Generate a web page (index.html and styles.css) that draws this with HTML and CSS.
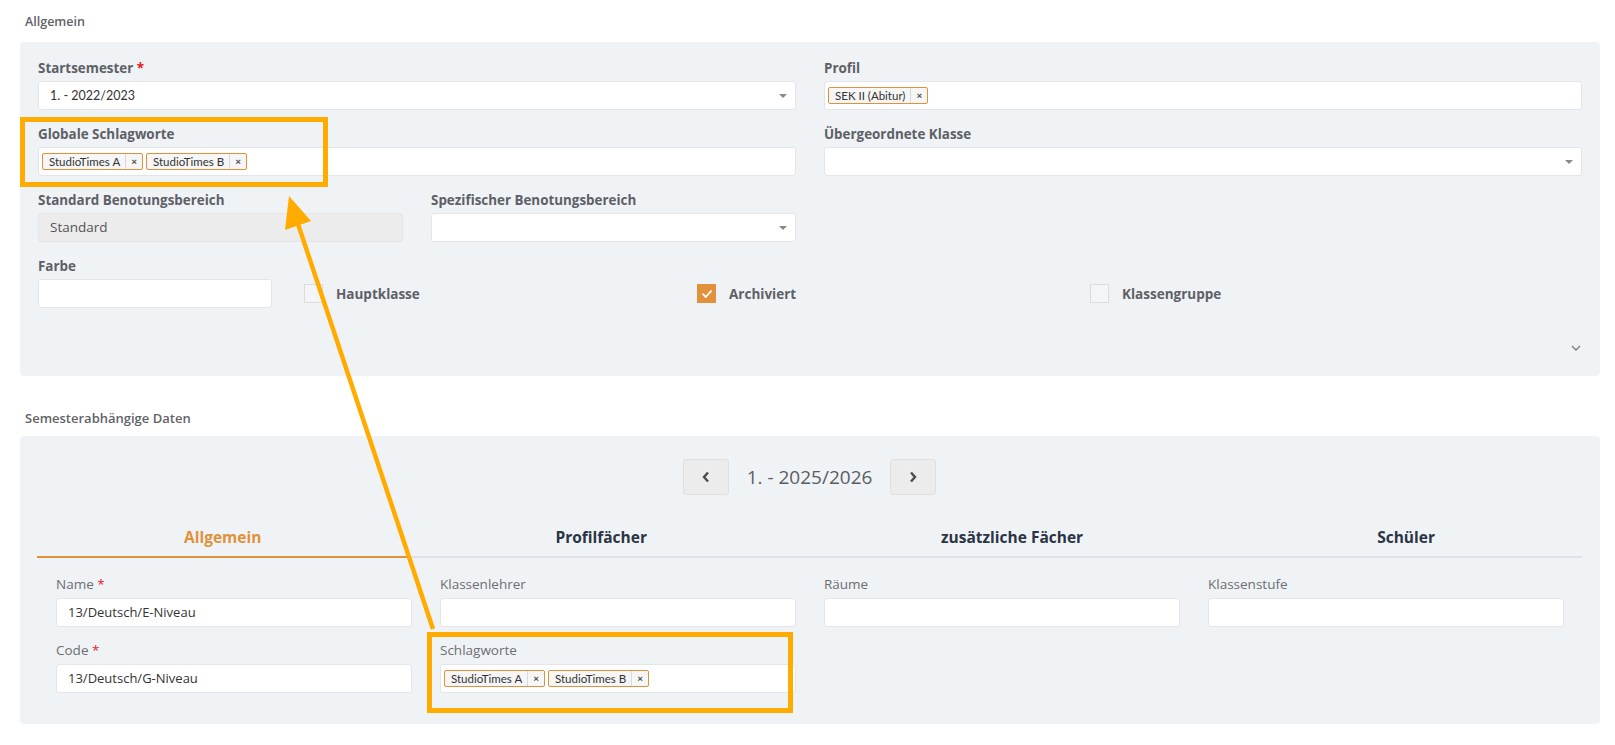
FILE: index.html
```html
<!DOCTYPE html>
<html lang="de">
<head>
<meta charset="utf-8">
<title>Klasse</title>
<link rel="stylesheet" href="styles.css">
</head>
<body>
<div class="page">
  <div class="section-title">Allgemein</div>
  <div class="panel panel-general">
    <div class="grid grid-2">
      <div class="field">
        <div class="label">Startsemester <span class="req">*</span></div>
        <div class="input select">1. - 2022/2023<span class="caret"></span></div>
      </div>
      <div class="field">
        <div class="label">Profil</div>
        <div class="input tags"><span class="tag"><span class="tag-text">SEK II (Abitur)</span><span class="tag-x">×</span></span></div>
      </div>
      <div class="field">
        <div class="label">Globale Schlagworte</div>
        <div class="input tags"><span class="tag"><span class="tag-text">StudioTimes A</span><span class="tag-x">×</span></span><span class="tag"><span class="tag-text">StudioTimes B</span><span class="tag-x">×</span></span></div>
      </div>
      <div class="field">
        <div class="label">Übergeordnete Klasse</div>
        <div class="input select"><span class="caret"></span></div>
      </div>
    </div>
    <div class="grid grid-4 row-gap">
      <div class="field">
        <div class="label">Standard Benotungsbereich</div>
        <div class="input disabled">Standard</div>
      </div>
      <div class="field">
        <div class="label">Spezifischer Benotungsbereich</div>
        <div class="input select"><span class="caret"></span></div>
      </div>
    </div>
    <div class="grid grid-check row-gap">
      <div class="field field-farbe">
        <div class="label">Farbe</div>
        <div class="input"></div>
      </div>
      <div class="check"><span class="box"></span><span class="check-label">Hauptklasse</span></div>
      <div class="check"><span class="box checked"><svg viewBox="0 0 10 8" width="10" height="8"><path d="M1 4.2 L3.8 7 L9 1.2" fill="none" stroke="#fff" stroke-width="1.8" stroke-linecap="round" stroke-linejoin="round"/></svg></span><span class="check-label">Archiviert</span></div>
      <div class="check"><span class="box"></span><span class="check-label">Klassengruppe</span></div>
    </div>
    <div class="panel-foot">
      <svg viewBox="0 0 10 6" width="10" height="6"><path d="M1 1 L5 5 L9 1" fill="none" stroke="#7a7d82" stroke-width="1.4"/></svg>
    </div>
  </div>

  <div class="section-title second">Semesterabhängige Daten</div>
  <div class="panel panel-semester">
    <div class="semnav">
      <div class="navbtn"><svg viewBox="0 0 8 12" width="8" height="12"><path d="M6 1.5 L2 6 L6 10.5" fill="none" stroke="#4a4d52" stroke-width="2.4"/></svg></div>
      <div class="semtext">1. - 2025/2026</div>
      <div class="navbtn"><svg viewBox="0 0 8 12" width="8" height="12"><path d="M2 1.5 L6 6 L2 10.5" fill="none" stroke="#4a4d52" stroke-width="2.4"/></svg></div>
    </div>
    <div class="tabs">
      <div class="tab active">Allgemein</div>
      <div class="tab">Profilfächer</div>
      <div class="tab">zusätzliche Fächer</div>
      <div class="tab">Schüler</div>
    </div>
    <div class="grid grid-4b">
      <div class="field">
        <div class="label2">Name <span class="req">*</span></div>
        <div class="input input2">13/Deutsch/E-Niveau</div>
      </div>
      <div class="field">
        <div class="label2">Klassenlehrer</div>
        <div class="input input2"></div>
      </div>
      <div class="field">
        <div class="label2">Räume</div>
        <div class="input input2"></div>
      </div>
      <div class="field">
        <div class="label2">Klassenstufe</div>
        <div class="input input2"></div>
      </div>
      <div class="field">
        <div class="label2">Code <span class="req">*</span></div>
        <div class="input input2">13/Deutsch/G-Niveau</div>
      </div>
      <div class="field">
        <div class="label2">Schlagworte</div>
        <div class="input input2 tags"><span class="tag"><span class="tag-text">StudioTimes A</span><span class="tag-x">×</span></span><span class="tag"><span class="tag-text">StudioTimes B</span><span class="tag-x">×</span></span></div>
      </div>
    </div>
  </div>

  <div class="highlight hl-1"></div>
  <div class="highlight hl-2"></div>
  <svg class="arrow" viewBox="0 0 1615 745" width="1615" height="745">
    <line x1="433" y1="629" x2="298" y2="224" stroke="#ffab00" stroke-width="4.5"/>
    <polygon points="289,196 311,221 285,230" fill="#ffab00"/>
  </svg>
</div>
</body>
</html>
```

FILE: styles.css
```css
* { box-sizing: border-box; }
html, body { margin: 0; padding: 0; background: #fff; }
body { font-family: "Lato", "Liberation Sans", sans-serif; color: #333; }

.page {
  position: relative;
  width: 1615px;
  height: 745px;
  padding: 14px 15px 0 20px;
}

.section-title {
  font-family: "Open Sans", "Liberation Sans", sans-serif;
  font-weight: 600;
  font-size: 12.5px;
  line-height: 16px;
  color: #5f6368;
  padding-left: 5px;
  margin-bottom: 12px;
}
.section-title.second { margin-top: 34px; margin-bottom: 10px; font-size: 13px; }

.panel {
  background: #f0f3f5;
  border-radius: 4px;
}
.panel-general { padding: 18px 18px 0 18px; height: 334px; }
.panel-semester { padding: 23px 18px 31px 17px; }

.grid { display: grid; column-gap: 28px; }
.grid-2 { grid-template-columns: 1fr 1fr; row-gap: 16px; }
.grid-4 { grid-template-columns: repeat(4, 1fr); }
.row-gap { margin-top: 16px; }
.grid-check { grid-template-columns: 266px 393px 393px 1fr; column-gap: 0; align-items: end; }
.field-farbe { width: 234px; }

.label {
  font-family: "Open Sans", "Liberation Sans", sans-serif;
  font-weight: 700;
  font-size: 13.4px;
  line-height: 16px;
  color: #5d6066;
  margin-bottom: 5px;
  white-space: nowrap;
}
.req { color: #e0211d; }

.input {
  position: relative;
  height: 29px;
  background: #fff;
  border: 1px solid #e3e5e7;
  border-radius: 3px;
  font-size: 12.5px;
  line-height: 27px;
  padding: 0 11px;
  color: #333;
}
.input.disabled {
  background: #ececec;
  color: #555;
  font-family: "Open Sans", "Liberation Sans", sans-serif;
  font-size: 13.5px;
}
.select .caret {
  position: absolute;
  right: 8px;
  top: 12px;
  width: 0; height: 0;
  border-left: 4px solid transparent;
  border-right: 4px solid transparent;
  border-top: 4px solid #888;
}

.tags { padding: 0 3px; display: flex; align-items: center; gap: 3px; }
.tag {
  display: inline-flex;
  align-items: stretch;
  height: 17px;
  border: 1px solid #e0913a;
  border-radius: 2px;
  background: #f6f6f6;
  font-family: "Lato", "Liberation Sans", sans-serif;
  font-size: 11.5px;
  line-height: 15px;
  color: #333;
}
.tag-text { padding: 0 5px 0 6px; }
.tag-x {
  border-left: 1px solid #d9d9d9;
  padding: 0 5px;
  font-weight: 700;
  font-size: 10px;
  color: #444;
}

.check { display: flex; align-items: center; height: 29px; }
.box {
  width: 19px; height: 19px;
  border: 1px solid #dcdcdc;
  background: #f3f5f6;
  display: flex; align-items: center; justify-content: center;
}
.box.checked { background: #e0913a; border-color: #e0913a; }
.check-label {
  margin-left: 13px;
  font-family: "Open Sans", "Liberation Sans", sans-serif;
  font-weight: 700;
  font-size: 13.5px;
  color: #5d6066;
}

.panel-foot {
  display: flex;
  justify-content: flex-end;
  padding: 37px 1px 0 0;
}

.semnav {
  display: flex;
  justify-content: center;
  align-items: center;
  gap: 18px;
}
.navbtn {
  width: 46px; height: 36px;
  background: #ececec;
  border: 1px solid #e0e0e0;
  border-radius: 3px;
  display: flex; align-items: center; justify-content: center;
}
.semtext {
  font-family: "Open Sans", "Liberation Sans", sans-serif;
  font-weight: 400;
  font-size: 19px;
  color: #5a5d62;
}

.tabs {
  display: flex;
  margin-top: 21px;
}
.tab {
  flex: 1 1 auto;
  text-align: center;
  font-family: "Open Sans", "Liberation Sans", sans-serif;
  font-weight: 700;
  font-size: 15.5px;
  line-height: 20px;
  padding: 11px 0 9px;
  color: #2b3445;
  border-bottom: 2px solid #dde2e8;
}
.tab.active { color: #e0913a; border-bottom-color: #e0913a; }

.grid-4b {
  grid-template-columns: repeat(4, 1fr);
  row-gap: 15px;
  padding: 18px 18px 0 19px;
}
.label2 {
  font-family: "Open Sans", "Liberation Sans", sans-serif;
  font-size: 13.5px;
  line-height: 16px;
  color: #6b6e73;
  margin-bottom: 6px;
}
.input2 {
  font-family: "Open Sans", "Liberation Sans", sans-serif;
  font-size: 13px;
}
.input2.tags { font-family: "Lato", "Liberation Sans", sans-serif; }

.highlight {
  position: absolute;
  border: 5px solid #ffab00;
  pointer-events: none;
}
.hl-1 { left: 20px; top: 117px; width: 308px; height: 70px; }
.hl-2 { left: 427px; top: 632px; width: 366px; height: 81px; }

.arrow { position: absolute; left: 0; top: 0; pointer-events: none; }
```
